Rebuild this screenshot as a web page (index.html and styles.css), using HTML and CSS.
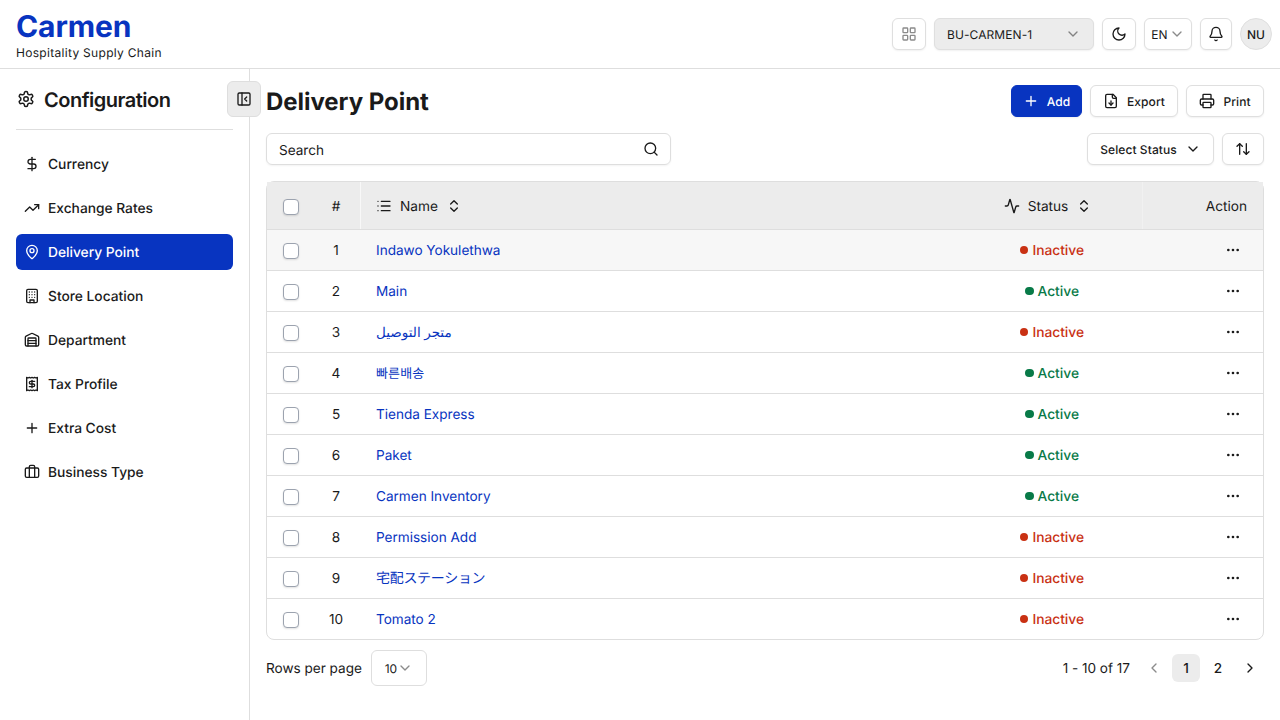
FILE: index.html
```html
<!DOCTYPE html>
<html lang="en">
<head>
<meta charset="utf-8">
<title>Carmen - Delivery Point</title>
<link rel="stylesheet" href="styles.css">
</head>
<body>
<svg class="sprite" aria-hidden="true">
  <symbol id="grid" viewBox="0 0 24 24"><rect width="7" height="7" x="3" y="3" rx="1"/><rect width="7" height="7" x="14" y="3" rx="1"/><rect width="7" height="7" x="14" y="14" rx="1"/><rect width="7" height="7" x="3" y="14" rx="1"/></symbol>
  <symbol id="down" viewBox="0 0 24 24"><path d="m6 9 6 6 6-6"/></symbol>
  <symbol id="left" viewBox="0 0 24 24"><path d="m15 18-6-6 6-6"/></symbol>
  <symbol id="right" viewBox="0 0 24 24"><path d="m9 18 6-6-6-6"/></symbol>
  <symbol id="updown" viewBox="0 0 24 24"><path d="m7 15 5 5 5-5"/><path d="m7 9 5-5 5 5"/></symbol>
  <symbol id="moon" viewBox="0 0 24 24"><path d="M12 3a6 6 0 0 0 9 9 9 9 0 1 1-9-9Z"/></symbol>
  <symbol id="bell" viewBox="0 0 24 24"><path d="M10.268 21a2 2 0 0 0 3.464 0"/><path d="M3.262 15.326A1 1 0 0 0 4 17h16a1 1 0 0 0 .74-1.673C19.41 13.956 18 12.499 18 8A6 6 0 0 0 6 8c0 4.499-1.411 5.956-2.738 7.326"/></symbol>
  <symbol id="gear" viewBox="0 0 24 24"><path d="M12.22 2h-.44a2 2 0 0 0-2 2v.18a2 2 0 0 1-1 1.73l-.43.25a2 2 0 0 1-2 0l-.15-.08a2 2 0 0 0-2.73.73l-.22.38a2 2 0 0 0 .73 2.73l.15.1a2 2 0 0 1 1 1.72v.51a2 2 0 0 1-1 1.74l-.15.09a2 2 0 0 0-.73 2.73l.22.38a2 2 0 0 0 2.73.73l.15-.08a2 2 0 0 1 2 0l.43.25a2 2 0 0 1 1 1.73V20a2 2 0 0 0 2 2h.44a2 2 0 0 0 2-2v-.18a2 2 0 0 1 1-1.73l.43-.25a2 2 0 0 1 2 0l.15.08a2 2 0 0 0 2.73-.73l.22-.39a2 2 0 0 0-.73-2.73l-.15-.08a2 2 0 0 1-1-1.74v-.5a2 2 0 0 1 1-1.74l.15-.09a2 2 0 0 0 .73-2.73l-.22-.38a2 2 0 0 0-2.73-.73l-.15.08a2 2 0 0 1-2 0l-.43-.25a2 2 0 0 1-1-1.73V4a2 2 0 0 0-2-2z"/><circle cx="12" cy="12" r="3"/></symbol>
  <symbol id="panel" viewBox="0 0 24 24"><rect width="18" height="18" x="3" y="3" rx="2"/><path d="M9 3v18"/><path d="m16 15-3-3 3-3"/></symbol>
  <symbol id="dollar" viewBox="0 0 24 24"><path d="M12 2v20"/><path d="M17 5H9.500a3.500 3.500 0 0 0 0 7h5a3.500 3.500 0 0 1 0 7H6"/></symbol>
  <symbol id="trend" viewBox="0 0 24 24"><path d="M16 7h6v6"/><path d="m22 7-8.500 8.500-5-5L2 17"/></symbol>
  <symbol id="pin" viewBox="0 0 24 24"><path d="M20 10c0 4.993-5.539 10.193-7.399 11.799a1 1 0 0 1-1.202 0C9.539 20.193 4 14.993 4 10a8 8 0 0 1 16 0"/><circle cx="12" cy="10" r="3"/></symbol>
  <symbol id="building" viewBox="0 0 24 24"><rect width="16" height="20" x="4" y="2" rx="2"/><path d="M9 22v-4h6v4M8 6h.01M16 6h.01M12 6h.01M12 10h.01M12 14h.01M16 10h.01M16 14h.01M8 10h.01M8 14h.01"/></symbol>
  <symbol id="warehouse" viewBox="0 0 24 24"><path d="M18 21V10a1 1 0 0 0-1-1H7a1 1 0 0 0-1 1v11"/><path d="M22 19a2 2 0 0 1-2 2H4a2 2 0 0 1-2-2V8a2 2 0 0 1 1.132-1.803l7.950-3.974a2 2 0 0 1 1.837 0l7.948 3.974A2 2 0 0 1 22 8z"/><path d="M6 13h12M6 17h12"/></symbol>
  <symbol id="receipt" viewBox="0 0 24 24"><path d="M4 2v20l2-1 2 1 2-1 2 1 2-1 2 1 2-1 2 1V2l-2 1-2-1-2 1-2-1-2 1-2-1-2 1Z"/><path d="M16 8h-6a2 2 0 1 0 0 4h4a2 2 0 1 1 0 4H8"/><path d="M12 17.500v-11"/></symbol>
  <symbol id="plus" viewBox="0 0 24 24"><path d="M5 12h14M12 5v14"/></symbol>
  <symbol id="luggage" viewBox="0 0 24 24"><path d="M16 20V4a2 2 0 0 0-2-2h-4a2 2 0 0 0-2 2v16"/><rect width="20" height="14" x="2" y="6" rx="2"/></symbol>
  <symbol id="filedown" viewBox="0 0 24 24"><path d="M15 2H6a2 2 0 0 0-2 2v16a2 2 0 0 0 2 2h12a2 2 0 0 0 2-2V7Z"/><path d="M14 2v4a2 2 0 0 0 2 2h4"/><path d="M12 18v-6"/><path d="m9 15 3 3 3-3"/></symbol>
  <symbol id="printer" viewBox="0 0 24 24"><path d="M6 18H4a2 2 0 0 1-2-2v-5a2 2 0 0 1 2-2h16a2 2 0 0 1 2 2v5a2 2 0 0 1-2 2h-2"/><path d="M6 9V3a1 1 0 0 1 1-1h10a1 1 0 0 1 1 1v6"/><rect x="6" y="14" width="12" height="8" rx="1"/></symbol>
  <symbol id="sort" viewBox="0 0 24 24"><path d="m21 16-4 4-4-4"/><path d="M17 20V4"/><path d="m3 8 4-4 4 4"/><path d="M7 4v16"/></symbol>
  <symbol id="search" viewBox="0 0 24 24"><circle cx="11" cy="11" r="8"/><path d="m21 21-4.300-4.300"/></symbol>
  <symbol id="list" viewBox="0 0 24 24"><path d="M3 12h.01M3 19h.01M3 5h.01M8 12h13M8 19h13M8 5h13"/></symbol>
  <symbol id="activity" viewBox="0 0 24 24"><path d="M22 12h-2.480a2 2 0 0 0-1.930 1.460l-2.350 8.360a.25.25 0 0 1-.48 0L9.240 2.180a.25.25 0 0 0-.48 0l-2.350 8.360A2 2 0 0 1 4.490 12H2"/></symbol>
  <symbol id="dots" viewBox="0 0 24 24"><circle cx="12" cy="12" r="1"/><circle cx="19" cy="12" r="1"/><circle cx="5" cy="12" r="1"/></symbol>
</svg>

<header class="topbar">
  <div class="brand">
    <div class="brand-name">Carmen</div>
    <div class="brand-sub">Hospitality Supply Chain</div>
  </div>
  <div class="tools">
    <button class="btn tool-grid"><svg class="icon faint"><use href="#grid"/></svg></button>
    <button class="btn unit"><span>BU-CARMEN-1</span><svg class="icon faint"><use href="#down"/></svg></button>
    <button class="btn tool-moon"><svg class="icon"><use href="#moon"/></svg></button>
    <button class="btn lang"><span>EN</span><svg class="icon faint"><use href="#down"/></svg></button>
    <button class="btn tool-bell"><svg class="icon"><use href="#bell"/></svg></button>
    <div class="avatar"><span>NU</span></div>
  </div>
</header>

<div class="layout">
  <aside class="sidebar">
    <div class="side-head"><svg class="icon gear"><use href="#gear"/></svg><span>Configuration</span></div>
    <nav class="nav">
      <a class="nav-item"><svg class="icon"><use href="#dollar"/></svg><span>Currency</span></a>
      <a class="nav-item"><svg class="icon"><use href="#trend"/></svg><span>Exchange Rates</span></a>
      <a class="nav-item active"><svg class="icon"><use href="#pin"/></svg><span>Delivery Point</span></a>
      <a class="nav-item"><svg class="icon"><use href="#building"/></svg><span>Store Location</span></a>
      <a class="nav-item"><svg class="icon"><use href="#warehouse"/></svg><span>Department</span></a>
      <a class="nav-item"><svg class="icon"><use href="#receipt"/></svg><span>Tax Profile</span></a>
      <a class="nav-item"><svg class="icon"><use href="#plus"/></svg><span>Extra Cost</span></a>
      <a class="nav-item"><svg class="icon"><use href="#luggage"/></svg><span>Business Type</span></a>
    </nav>
    <button class="collapse"><svg class="icon"><use href="#panel"/></svg></button>
  </aside>

  <main class="main">
    <div class="title-row">
      <h1>Delivery Point</h1>
      <div class="actions">
        <button class="btn primary add"><svg class="icon"><use href="#plus"/></svg><span>Add</span></button>
        <button class="btn export"><svg class="icon"><use href="#filedown"/></svg><span>Export</span></button>
        <button class="btn print"><svg class="icon"><use href="#printer"/></svg><span>Print</span></button>
      </div>
    </div>
    <div class="filter-row">
      <div class="search"><span>Search</span><svg class="icon"><use href="#search"/></svg></div>
      <div class="actions">
        <button class="btn status-filter"><span>Select Status</span><svg class="icon"><use href="#down"/></svg></button>
        <button class="btn sorter"><svg class="icon"><use href="#sort"/></svg></button>
      </div>
    </div>

    <div class="table">
      <div class="row head">
        <div class="cell check"><span class="box"></span></div>
        <div class="cell num"><span>#</span></div>
        <div class="cell name"><svg class="icon"><use href="#list"/></svg><span>Name</span><svg class="icon"><use href="#updown"/></svg></div>
        <div class="cell status"><svg class="icon"><use href="#activity"/></svg><span>Status</span><svg class="icon"><use href="#updown"/></svg></div>
        <div class="cell action"><span>Action</span></div>
      </div>
      <div class="row hover"><div class="cell check"><span class="box"></span></div><div class="cell num"><span>1</span></div><div class="cell name"><span>Indawo Yokulethwa</span></div><div class="cell status off"><i class="dot"></i><span>Inactive</span></div><div class="cell action"><svg class="icon"><use href="#dots"/></svg></div></div>
      <div class="row"><div class="cell check"><span class="box"></span></div><div class="cell num"><span>2</span></div><div class="cell name"><span>Main</span></div><div class="cell status on"><i class="dot"></i><span>Active</span></div><div class="cell action"><svg class="icon"><use href="#dots"/></svg></div></div>
      <div class="row"><div class="cell check"><span class="box"></span></div><div class="cell num"><span>3</span></div><div class="cell name"><span class="arabic" lang="ar">متجر التوصيل</span></div><div class="cell status off"><i class="dot"></i><span>Inactive</span></div><div class="cell action"><svg class="icon"><use href="#dots"/></svg></div></div>
      <div class="row"><div class="cell check"><span class="box"></span></div><div class="cell num"><span>4</span></div><div class="cell name"><span class="korean" lang="ko">빠른배송</span></div><div class="cell status on"><i class="dot"></i><span>Active</span></div><div class="cell action"><svg class="icon"><use href="#dots"/></svg></div></div>
      <div class="row"><div class="cell check"><span class="box"></span></div><div class="cell num"><span>5</span></div><div class="cell name"><span>Tienda Express</span></div><div class="cell status on"><i class="dot"></i><span>Active</span></div><div class="cell action"><svg class="icon"><use href="#dots"/></svg></div></div>
      <div class="row"><div class="cell check"><span class="box"></span></div><div class="cell num"><span>6</span></div><div class="cell name"><span>Paket</span></div><div class="cell status on"><i class="dot"></i><span>Active</span></div><div class="cell action"><svg class="icon"><use href="#dots"/></svg></div></div>
      <div class="row"><div class="cell check"><span class="box"></span></div><div class="cell num"><span>7</span></div><div class="cell name"><span>Carmen Inventory</span></div><div class="cell status on"><i class="dot"></i><span>Active</span></div><div class="cell action"><svg class="icon"><use href="#dots"/></svg></div></div>
      <div class="row"><div class="cell check"><span class="box"></span></div><div class="cell num"><span>8</span></div><div class="cell name"><span>Permission Add</span></div><div class="cell status off"><i class="dot"></i><span>Inactive</span></div><div class="cell action"><svg class="icon"><use href="#dots"/></svg></div></div>
      <div class="row"><div class="cell check"><span class="box"></span></div><div class="cell num"><span>9</span></div><div class="cell name"><span class="japanese" lang="ja">宅配ステーション</span></div><div class="cell status off"><i class="dot"></i><span>Inactive</span></div><div class="cell action"><svg class="icon"><use href="#dots"/></svg></div></div>
      <div class="row"><div class="cell check"><span class="box"></span></div><div class="cell num"><span>10</span></div><div class="cell name"><span>Tomato 2</span></div><div class="cell status off"><i class="dot"></i><span>Inactive</span></div><div class="cell action"><svg class="icon"><use href="#dots"/></svg></div></div>
    </div>

    <footer class="pager">
      <div class="per-page"><span>Rows per page</span><button class="size"><span>10</span><svg class="icon faint"><use href="#down"/></svg></button></div>
      <div class="pages">
        <span class="range">1 - 10 of 17</span>
        <button class="page faint"><svg class="icon"><use href="#left"/></svg></button>
        <button class="page current"><span>1</span></button>
        <button class="page"><span>2</span></button>
        <button class="page"><svg class="icon"><use href="#right"/></svg></button>
      </div>
    </footer>
  </main>
</div>
</body>
</html>
```
FILE: styles.css
```css
* { box-sizing: border-box; }
body {
  margin: 0;
  height: 720px;
  overflow: hidden;
  display: flex;
  flex-direction: column;
  background: #fff;
  color: #1a1a1a;
  font: 400 13.6px/20px Inter, "Noto Sans", "Noto Sans CJK JP", sans-serif;
  letter-spacing: -0.02px;
  text-rendering: geometricPrecision;
}
button { font: inherit; letter-spacing: inherit; color: inherit; margin: 0; padding: 0; text-rendering: inherit; }
.sprite { display: none; }
.icon {
  width: 16px;
  height: 16px;
  flex: none;
  fill: none;
  stroke: currentColor;
  stroke-width: 2;
  stroke-linecap: round;
  stroke-linejoin: round;
}
.faint { opacity: 0.5; }

.topbar {
  height: 69px;
  flex: none;
  display: flex;
  align-items: center;
  justify-content: space-between;
  padding: 0 8px 0 16px;
  border-bottom: 1px solid #dedede;
}
.brand { padding-top: 1px; }
.brand-name { font-size: 30px; line-height: 36px; font-weight: 700; letter-spacing: -0.1px; color: #0834c0; }
.brand-sub { font-size: 12px; line-height: 16px; letter-spacing: 0.3px; }
.tools { display: flex; gap: 8px; }
.btn {
  height: 32px;
  display: flex;
  align-items: center;
  justify-content: center;
  background: #fff;
  border: 1px solid #dfdfdf;
  border-radius: 6px;
  font-size: 12px;
  font-weight: 500;
  line-height: 16px;
  letter-spacing: 0.08px;
  box-shadow: 0 1px 2px rgba(0, 0, 0, 0.06);
}
.btn span, .avatar span, .size span { padding-top: 1px; }
.tool-grid, .tool-moon { width: 34px; }
.tool-bell { width: 32px; }
.unit { width: 160px; justify-content: space-between; padding: 0 12px; background: #ececec; font-weight: 400; }
.lang { width: 48px; gap: 1px; font-weight: 400; }
.avatar {
  width: 32px;
  height: 32px;
  display: grid;
  place-items: center;
  border: 1px solid #dfdfdf;
  border-radius: 50%;
  background: #ececec;
  font-size: 12px;
  font-weight: 500;
}

.layout { flex: 1; display: flex; min-height: 0; }
.sidebar { position: relative; width: 250px; flex: none; padding: 16px; border-right: 1px solid #dedede; }
.side-head {
  height: 45px;
  display: flex;
  align-items: flex-start;
  gap: 9px;
  border-bottom: 1px solid #dedede;
  font-size: 20px;
  line-height: 30px;
  font-weight: 600;
  letter-spacing: -0.5px;
}
.gear { width: 18px; height: 18px; margin: 5px 0 0 1px; }
.nav { display: flex; flex-direction: column; gap: 8px; margin-top: 16px; }
.nav-item { height: 36px; display: flex; align-items: center; gap: 8px; padding: 0 8px; border-radius: 6px; font-size: 13.8px; font-weight: 500; }
.nav-item span, .cell > span:not(.box), .pager > div > span, .page span { padding-top: 1px; }
.nav-item.active { background: #0834c0; color: #fff; }
.collapse {
  position: absolute;
  top: 12px;
  right: -12px;
  width: 34px;
  height: 36px;
  display: grid;
  place-items: center;
  border: 1px solid #dedede;
  border-radius: 6px;
  background: #ececec;
}

.main { flex: 1; min-width: 0; padding: 16px 16px 0; display: flex; flex-direction: column; }
.title-row, .filter-row, .pager { display: flex; align-items: center; justify-content: space-between; }
.title-row { height: 32px; }
h1 { margin: 0; padding-top: 2px; font-size: 24px; line-height: 32px; font-weight: 700; letter-spacing: -0.05px; }
.actions { display: flex; gap: 8px; }
.primary { background: #0834c0; border-color: #0834c0; color: #fff; }
.add { width: 71px; gap: 8px; }
.export { width: 88px; gap: 8px; }
.print { width: 78px; gap: 8px; }
.filter-row { margin-top: 16px; }
.search {
  width: 405px;
  height: 32px;
  display: flex;
  align-items: center;
  justify-content: space-between;
  padding: 0 11px 0 12px;
  border: 1px solid #dedede;
  border-radius: 6px;
  box-shadow: 0 1px 2px rgba(0, 0, 0, 0.05);
}
.search span { padding-top: 3px; }
.status-filter { width: 127px; gap: 8px; }
.sorter { width: 42px; }

.table { margin-top: 16px; border: 1px solid #dedede; border-radius: 8px; }
.row { display: grid; grid-template-columns: 45px 48px 1fr 190px 121px; height: 41px; border-bottom: 1px solid #dedede; }
.row:last-child { height: 40px; border-bottom: 0; }
.row.head { height: 48px; background: #ececec; }
.row.hover { background: #f7f7f7; }
.cell { display: flex; align-items: center; }
.check { padding-left: 16px; }
.box {
  width: 16px;
  height: 16px;
  margin-top: 2px;
  border: 1px solid #9ca3af;
  border-radius: 4px;
  background: #fff;
  box-shadow: 0 1px 2px rgba(0, 0, 0, 0.12);
}
.head .box { margin-top: 3px; }
.num { justify-content: center; }
.name { padding-left: 16px; color: #0834c0; }
.status { justify-content: center; padding-left: 10px; font-size: 13.8px; font-weight: 500; }
.action { justify-content: flex-end; padding-right: 22px; }
.head .cell { color: #1a1a1a; font-size: 13.7px; font-weight: 400; }
.head .cell > span:not(.box) { padding-top: 3px; }
.head .name, .head .status { gap: 8px; }
.head .name { border-left: 1px solid #f8f8f8; padding-left: 15px; }
.head .status { padding-left: 2px; }
.head .action { border-left: 1px solid #f1f1f1; padding-right: 16px; }
.dot { width: 8.5px; height: 8.5px; margin-right: 4px; border-radius: 50%; background: currentColor; }
.off { color: #c93113; }
.on { color: #087a48; }
.cell .arabic { font-family: "Noto Sans", "DejaVu Sans", sans-serif; font-size: 13.5px; letter-spacing: 0; margin-top: -2px; }
.cell .korean { font-family: "Noto Sans CJK KR", sans-serif; font-size: 13px; letter-spacing: 0.15px; margin-top: -2px; }
.cell .japanese { font-family: "Noto Sans CJK JP", sans-serif; font-size: 14px; letter-spacing: -0.3px; margin-top: -2px; }

.pager { margin-top: 10px; height: 36px; }
.per-page, .pages { display: flex; align-items: center; }
.per-page { gap: 9px; }
.size {
  width: 56px;
  height: 36px;
  display: flex;
  align-items: center;
  justify-content: center;
  border: 1px solid #dedede;
  border-radius: 6px;
  background: #fff;
  font-size: 12px;
}
.pages { gap: 4px; }
.range { margin-right: 6px; }
.page { width: 28px; height: 28px; display: grid; place-items: center; border: 0; border-radius: 6px; background: none; font-weight: 500; }
.current { background: #ececec; }
```
